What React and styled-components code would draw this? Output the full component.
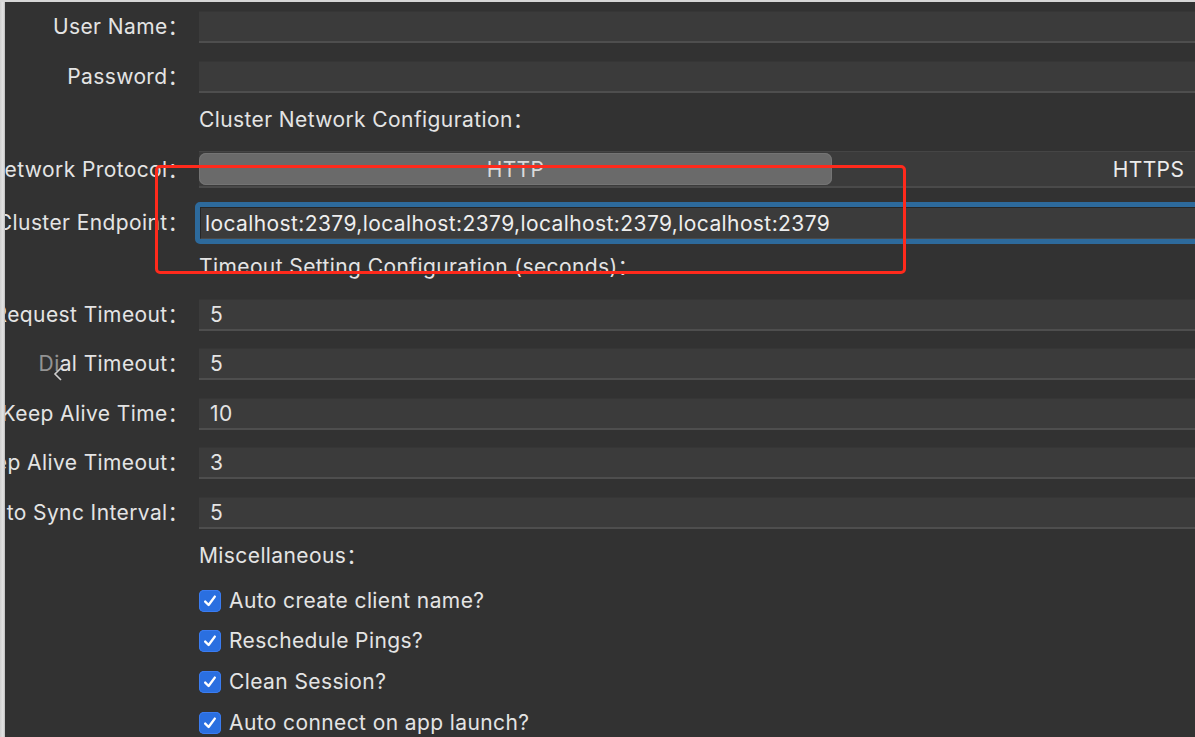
import React from "react";
import styled, { createGlobalStyle } from "styled-components";

const GlobalStyle = createGlobalStyle`
  html, body {
    margin: 0;
    padding: 0;
    background: #323232;
    overflow: hidden;
  }
  body {
    font-family: Inter, "Noto Sans", "Noto Sans CJK SC", sans-serif;
    -webkit-font-smoothing: antialiased;
  }
`;

const Screen = styled.div`
  position: relative;
  width: 1195px;
  height: 737px;
  display: flex;
  overflow: hidden;
  border-top: 2px solid #d6d6d6;
  box-sizing: border-box;
`;

const SideStrip = styled.div`
  width: 5px;
  flex: none;
  position: relative;
  z-index: 1;
  background: linear-gradient(90deg, #cfcfcf 0, #e4e4e4 60%, #bdbdbd 100%);
`;

const Panel = styled.div`
  flex: 1;
  background: #323232;
  overflow: hidden;
  padding-top: 9px;
  display: flex;
  flex-direction: column;
  margin-left: -5px;
`;

const Row = styled.div`
  display: grid;
  grid-template-columns: 189px 1266px;
  column-gap: 10px;
  align-items: center;
  margin-top: ${(p) => p.$gap || 0}px;
`;

const text = `
  font-size: 21px;
  letter-spacing: 0.4px;
  color: #e4e4e4;
  white-space: nowrap;
`;

const Label = styled.div`
  ${text}
  display: flex;
  justify-content: flex-end;
  line-height: 24px;
`;

const Faded = styled.span`
  opacity: 0.55;
`;

const Heading = styled.div`
  ${text}
  grid-column: 2;
  line-height: 24px;
`;

const Input = styled.div`
  ${text}
  height: 32px;
  box-sizing: border-box;
  background: #3b3b3b;
  border-top: 1px solid #363636;
  border-bottom: 2px solid #4e4e4e;
  padding: 0 11px;
  display: flex;
  align-items: center;
`;

const FocusRing = styled.div`
  height: 42px;
  box-sizing: border-box;
  margin-left: -4px;
  border: 5px solid #2d6a9c;
  border-radius: 5px;
  display: flex;
`;

const FocusedInput = styled(Input)`
  flex: 1;
  height: 100%;
  border: 1px solid #262626;
  border-bottom-color: #4a4a4a;
  padding: 0 4px;
  color: #eeeeee;
`;

const Segmented = styled.div`
  height: 37px;
  box-sizing: border-box;
  background: #3b3b3b;
  border-top: 1px solid #454545;
  border-bottom: 2px solid #4a4a4a;
  display: grid;
  grid-template-columns: 1fr 1fr;
  align-items: stretch;
`;

const Segment = styled.div`
  ${text}
  display: flex;
  align-items: center;
  justify-content: center;
  color: ${(p) => (p.$active ? "#dadada" : "#ececec")};
  background: ${(p) => (p.$active ? "#6a6a6a" : "transparent")};
  border-radius: 7px;
  margin: 1px 0;
  box-shadow: ${(p) => (p.$active ? "inset 0 0 0 1px #747474" : "none")};
`;

const CheckRow = styled.label`
  ${text}
  grid-column: 2;
  display: flex;
  align-items: center;
  gap: 8px;
  line-height: 28px;
`;

const Box = styled.span`
  width: 22px;
  height: 22px;
  border-radius: 5px;
  background: #2a6fe0;
  box-shadow: inset 0 0 0 1px #3b7cf0;
  display: flex;
  align-items: center;
  justify-content: center;
  flex: none;
`;

const Annotation = styled.div`
  position: absolute;
  left: 155px;
  top: 163px;
  width: 751px;
  height: 109px;
  box-sizing: border-box;
  border: 3px solid #ff2a1c;
  border-radius: 5px;
  pointer-events: none;
`;

const Cursor = styled.svg`
  position: absolute;
  left: 52px;
  top: 361px;
  pointer-events: none;
`;

const Check = () => (
  <svg width="16" height="16" viewBox="0 0 16 16">
    <path
      d="M3.2 8.6 L6.6 12 L12.8 3.6"
      fill="none"
      stroke="#fff"
      strokeWidth="2.4"
      strokeLinecap="round"
      strokeLinejoin="round"
    />
  </svg>
);

const fields = [
  { label: "Request Timeout：", value: "5", gap: 20 },
  { label: "Dial Timeout：", value: "5", gap: 17, faded: 2 },
  { label: "Keep Alive Time：", value: "10", gap: 18 },
  { label: "Keep Alive Timeout：", value: "3", gap: 17 },
  { label: "Auto Sync Interval：", value: "5", gap: 18 },
];

const checks = [
  { text: "Auto create client name?", gap: 19 },
  { text: "Reschedule Pings?", gap: 12 },
  { text: "Clean Session?", gap: 13 },
  { text: "Auto connect on app launch?", gap: 13 },
];

export default function App() {
  return (
    <Screen>
      <GlobalStyle />
      <SideStrip />
      <Panel>
        <Row>
          <Label>User Name：</Label>
          <Input />
        </Row>
        <Row $gap={18}>
          <Label>Password：</Label>
          <Input />
        </Row>
        <Row $gap={15}>
          <Heading>Cluster Network Configuration：</Heading>
        </Row>
        <Row $gap={19}>
          <Label>Network Protocol：</Label>
          <Segmented>
            <Segment $active>HTTP</Segment>
            <Segment>HTTPS</Segment>
          </Segmented>
        </Row>
        <Row $gap={14}>
          <Label>Cluster Endpoint：</Label>
          <FocusRing>
            <FocusedInput>
              localhost:2379,localhost:2379,localhost:2379,localhost:2379
            </FocusedInput>
          </FocusRing>
        </Row>
        <Row $gap={11}>
          <Heading>Timeout Setting Configuration (seconds)：</Heading>
        </Row>
        {fields.map((f) => (
          <Row key={f.label} $gap={f.gap}>
            <Label>
              {f.faded ? (
                <>
                  <Faded>{f.label.slice(0, f.faded)}</Faded>
                  {f.label.slice(f.faded)}
                </>
              ) : (
                f.label
              )}
            </Label>
            <Input>{f.value}</Input>
          </Row>
        ))}
        <Row $gap={15}>
          <Heading>Miscellaneous：</Heading>
        </Row>
        {checks.map((c) => (
          <Row key={c.text} $gap={c.gap}>
            <CheckRow>
              <Box>
                <Check />
              </Box>
              {c.text}
            </CheckRow>
          </Row>
        ))}
      </Panel>
      <Annotation />
      <Cursor width="12" height="20" viewBox="0 0 12 20">
        <path d="M10 4 L3 11 L9 17" fill="none" stroke="#cfcfcf" strokeWidth="1.6" />
      </Cursor>
    </Screen>
  );
}
